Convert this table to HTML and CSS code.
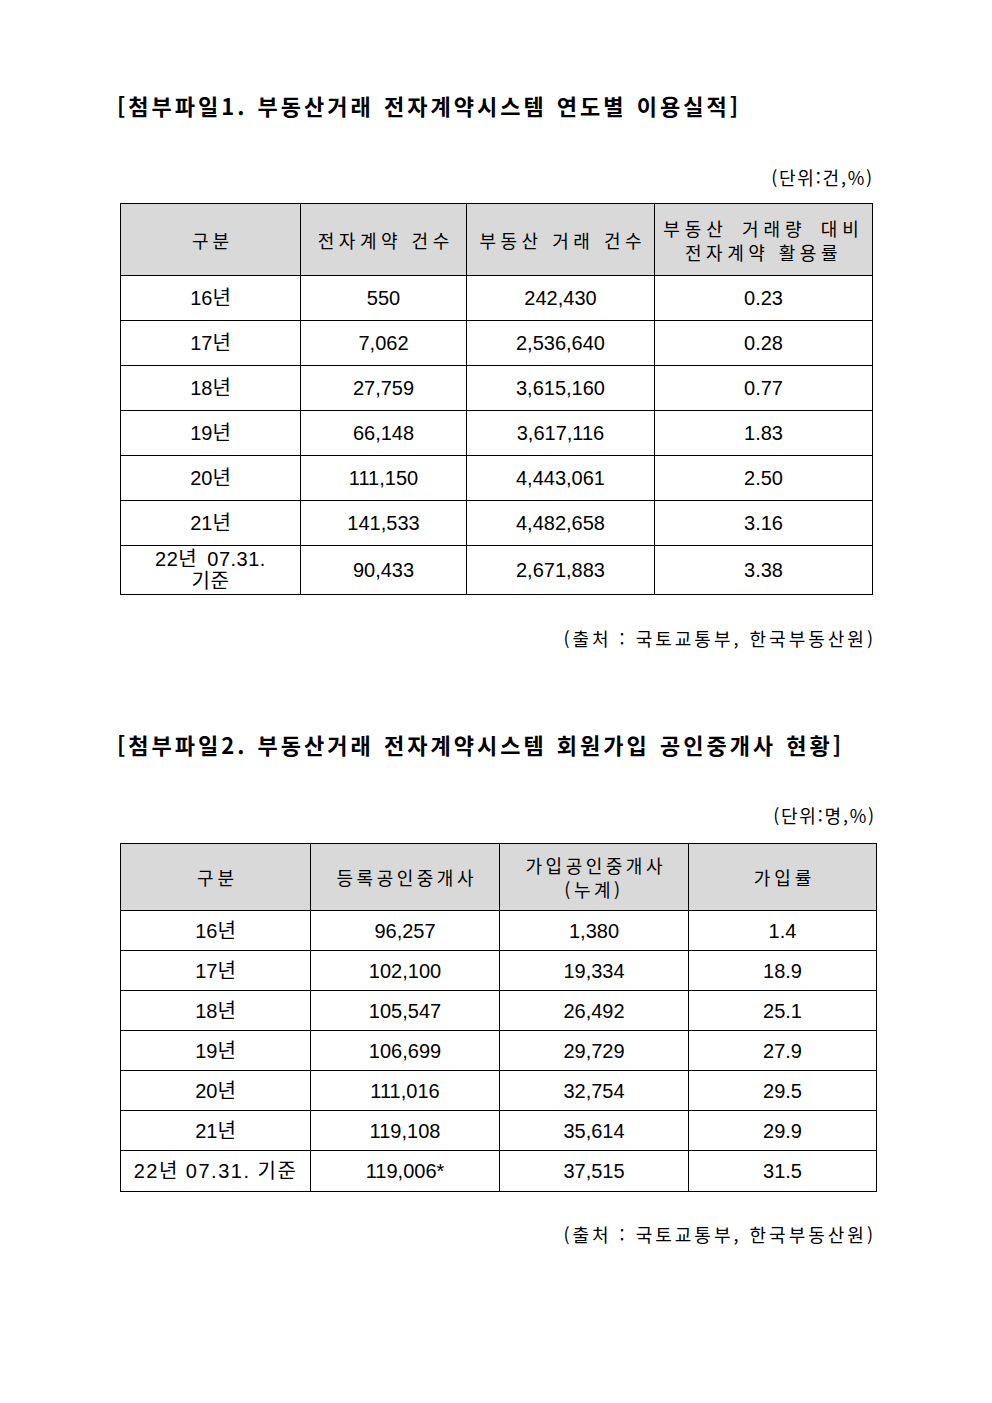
FILE: index.html
```html
<!DOCTYPE html>
<html lang="ko">
<head>
<meta charset="utf-8">
<title>부동산거래 전자계약시스템</title>
<link rel="stylesheet" href="styles.css">
</head>
<body>
<div class="sheet">
  <h2 class="title t1">[첨부파일1. 부동산거래 전자계약시스템 연도별 이용실적]</h2>
  <p class="unit u1">(단위:건,%)</p>
  <table class="grid g1">
    <colgroup>
      <col style="width:180px"><col style="width:166px"><col style="width:188px"><col style="width:218px">
    </colgroup>
    <thead>
      <tr class="hr1">
        <th class="ls4">구분</th>
        <th class="ls45">전자계약 건수</th>
        <th class="ls45">부동산 거래 건수</th>
        <th class="two"><span class="l1">부동산 거래량 대비</span><br><span class="l2">전자계약 활용률</span></th>
      </tr>
    </thead>
    <tbody>
      <tr class="r1"><td>16년</td><td>550</td><td>242,430</td><td>0.23</td></tr>
      <tr class="r1"><td>17년</td><td>7,062</td><td>2,536,640</td><td>0.28</td></tr>
      <tr class="r1"><td>18년</td><td>27,759</td><td>3,615,160</td><td>0.77</td></tr>
      <tr class="r1"><td>19년</td><td>66,148</td><td>3,617,116</td><td>1.83</td></tr>
      <tr class="r1"><td>20년</td><td>111,150</td><td>4,443,061</td><td>2.50</td></tr>
      <tr class="r1"><td>21년</td><td>141,533</td><td>4,482,658</td><td>3.16</td></tr>
      <tr class="r1last"><td class="multi">22년 07.31.<br>기준</td><td>90,433</td><td>2,671,883</td><td>3.38</td></tr>
    </tbody>
  </table>
  <p class="source s1">(출처 : 국토교통부, 한국부동산원)</p>

  <h2 class="title t2">[첨부파일2. 부동산거래 전자계약시스템 회원가입 공인중개사 현황]</h2>
  <p class="unit u2">(단위:명,%)</p>
  <table class="grid g2">
    <colgroup>
      <col style="width:190px"><col style="width:189px"><col style="width:189px"><col style="width:188px">
    </colgroup>
    <thead>
      <tr class="hr2">
        <th class="ls4">구분</th>
        <th class="ls35">등록공인중개사</th>
        <th class="two ls35">가입공인중개사<br>(누계)</th>
        <th class="ls4">가입률</th>
      </tr>
    </thead>
    <tbody>
      <tr class="r2"><td>16년</td><td>96,257</td><td>1,380</td><td>1.4</td></tr>
      <tr class="r2"><td>17년</td><td>102,100</td><td>19,334</td><td>18.9</td></tr>
      <tr class="r2"><td>18년</td><td>105,547</td><td>26,492</td><td>25.1</td></tr>
      <tr class="r2"><td>19년</td><td>106,699</td><td>29,729</td><td>27.9</td></tr>
      <tr class="r2"><td>20년</td><td>111,016</td><td>32,754</td><td>29.5</td></tr>
      <tr class="r2"><td>21년</td><td>119,108</td><td>35,614</td><td>29.9</td></tr>
      <tr class="r2last"><td class="small">22년 07.31. 기준</td><td>119,006*</td><td>37,515</td><td>31.5</td></tr>
    </tbody>
  </table>
  <p class="source s2">(출처 : 국토교통부, 한국부동산원)</p>
</div>
</body>
</html>
```

FILE: styles.css
```css
html, body {
  margin: 0;
  padding: 0;
  background: #ffffff;
  color: #000000;
}

body {
  font-family: "Liberation Sans", "Noto Sans CJK KR", sans-serif;
}

.sheet {
  width: 756px;
  margin-left: 120px;
  padding-top: 91px;
  padding-bottom: 100px;
}

.title {
  margin: 0;
  font-family: "Noto Sans CJK KR", sans-serif;
  font-size: 22px;
  font-weight: 700;
  line-height: 28px;
  letter-spacing: 3px;
  word-spacing: 1px;
  white-space: nowrap;
  margin-left: -3px;
}

.t2 {
  margin-top: 82px;
}

.unit,
.source {
  margin: 0;
  text-align: right;
  font-family: "Noto Sans CJK KR", sans-serif;
  font-size: 18px;
  line-height: 20px;
  white-space: nowrap;
}

.unit {
  margin-top: 48px;
  letter-spacing: 1.8px;
}

.u1 { padding-right: 2px; }
.u2 { margin-top: 47px; padding-right: 0; }

.source {
  margin-top: 33px;
  letter-spacing: 3px;
}

.s1 { padding-right: 0; }
.s2 { padding-right: 0; margin-top: 32px; }

.grid {
  border-collapse: collapse;
  table-layout: fixed;
  margin-top: 16px;
}

.g1 { width: 752px; }
.g2 { width: 756px; margin-top: 18px; }

.grid th,
.grid td {
  border: 1px solid #000000;
  padding: 0;
  text-align: center;
  vertical-align: middle;
  white-space: nowrap;
}

.grid th {
  background: #d9d9d9;
  font-family: "Noto Sans CJK KR", sans-serif;
  font-size: 18px;
  font-weight: 400;
  line-height: 24px;
}

.grid td {
  font-size: 20px;
  line-height: 22px;
}

.ls4 { letter-spacing: 4px; text-indent: 4px; }
.ls45 { letter-spacing: 4.5px; text-indent: 4.5px; }
.ls35 { letter-spacing: 3.5px; text-indent: 3.5px; }

.two .l1 { letter-spacing: 5px; word-spacing: 4px; }
.two .l2 { letter-spacing: 4.5px; }

.hr1 { height: 72px; }
.r1 { height: 45px; }
.r1last { height: 49px; }

.hr2 { height: 67px; }
.r2 { height: 40px; }
.r2last { height: 41px; }

.multi {
  letter-spacing: 0.5px;
  word-spacing: 4px;
  line-height: 23px;
}

.small {
  font-size: 18px;
  letter-spacing: 1.5px;
}
```
